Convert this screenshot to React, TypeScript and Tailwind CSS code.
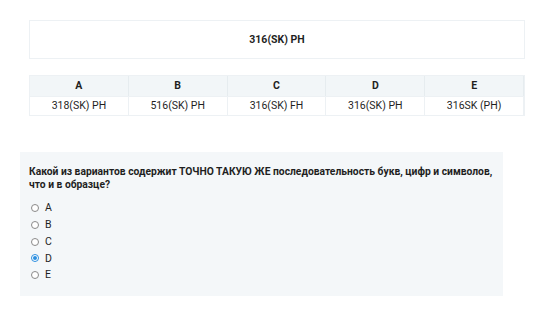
const options = [
  { key: 'A', value: '318(SK) PH' },
  { key: 'B', value: '516(SK) PH' },
  { key: 'C', value: '316(SK) FH' },
  { key: 'D', value: '316(SK) PH' },
  { key: 'E', value: '316SK (PH)' },
];

export default function App() {
  const selected = 'D';

  return (
    <div className="w-[554px] h-[315px] bg-white font-['Roboto',sans-serif] text-[#1f1f1f]">
      <div className="px-[29px] pt-[20px]">
        <div className="h-[39px] border border-[#edf1f4] flex items-center justify-center text-[10.5px] font-bold">
          316(SK) PH
        </div>

        <div className="mt-[16px] grid grid-cols-5 border border-[#edf1f4] text-[10.5px]">
          {options.map((o) => (
            <div key={o.key} className="h-[20px] bg-[#f2f6f8] border-r border-[#e6ecef] last:border-r-0 flex items-center justify-center font-bold">
              {o.key}
            </div>
          ))}
          {options.map((o) => (
            <div key={o.key + 'v'} className="h-[19px] border-t border-r border-[#edf1f4] flex items-center justify-center">
              {o.value}
            </div>
          ))}
        </div>
      </div>

      <div className="ml-[20px] mt-[36px] w-[483px] h-[144px] bg-[#f4f7f9] px-[9px] pt-[13px]">
        <p className="text-[10.3px] font-bold leading-[13px]">
          Какой из вариантов содержит ТОЧНО ТАКУЮ ЖЕ последовательность букв, цифр и символов, что и в образце?
        </p>
        <div className="mt-[9px] flex flex-col">
          {options.map((o) => (
            <label key={o.key} className="h-[16.7px] flex items-center gap-[6px] pl-[2px] text-[10.5px]">
              <span
                className={
                  'w-[8px] h-[8px] rounded-full border flex items-center justify-center bg-white ' +
                  (o.key === selected ? 'border-[#2a8ee0]' : 'border-[#8a8a8a]')
                }
              >
                {o.key === selected && <span className="w-[4px] h-[4px] rounded-full bg-[#2a8ee0]" />}
              </span>
              {o.key}
            </label>
          ))}
        </div>
      </div>
    </div>
  );
}
